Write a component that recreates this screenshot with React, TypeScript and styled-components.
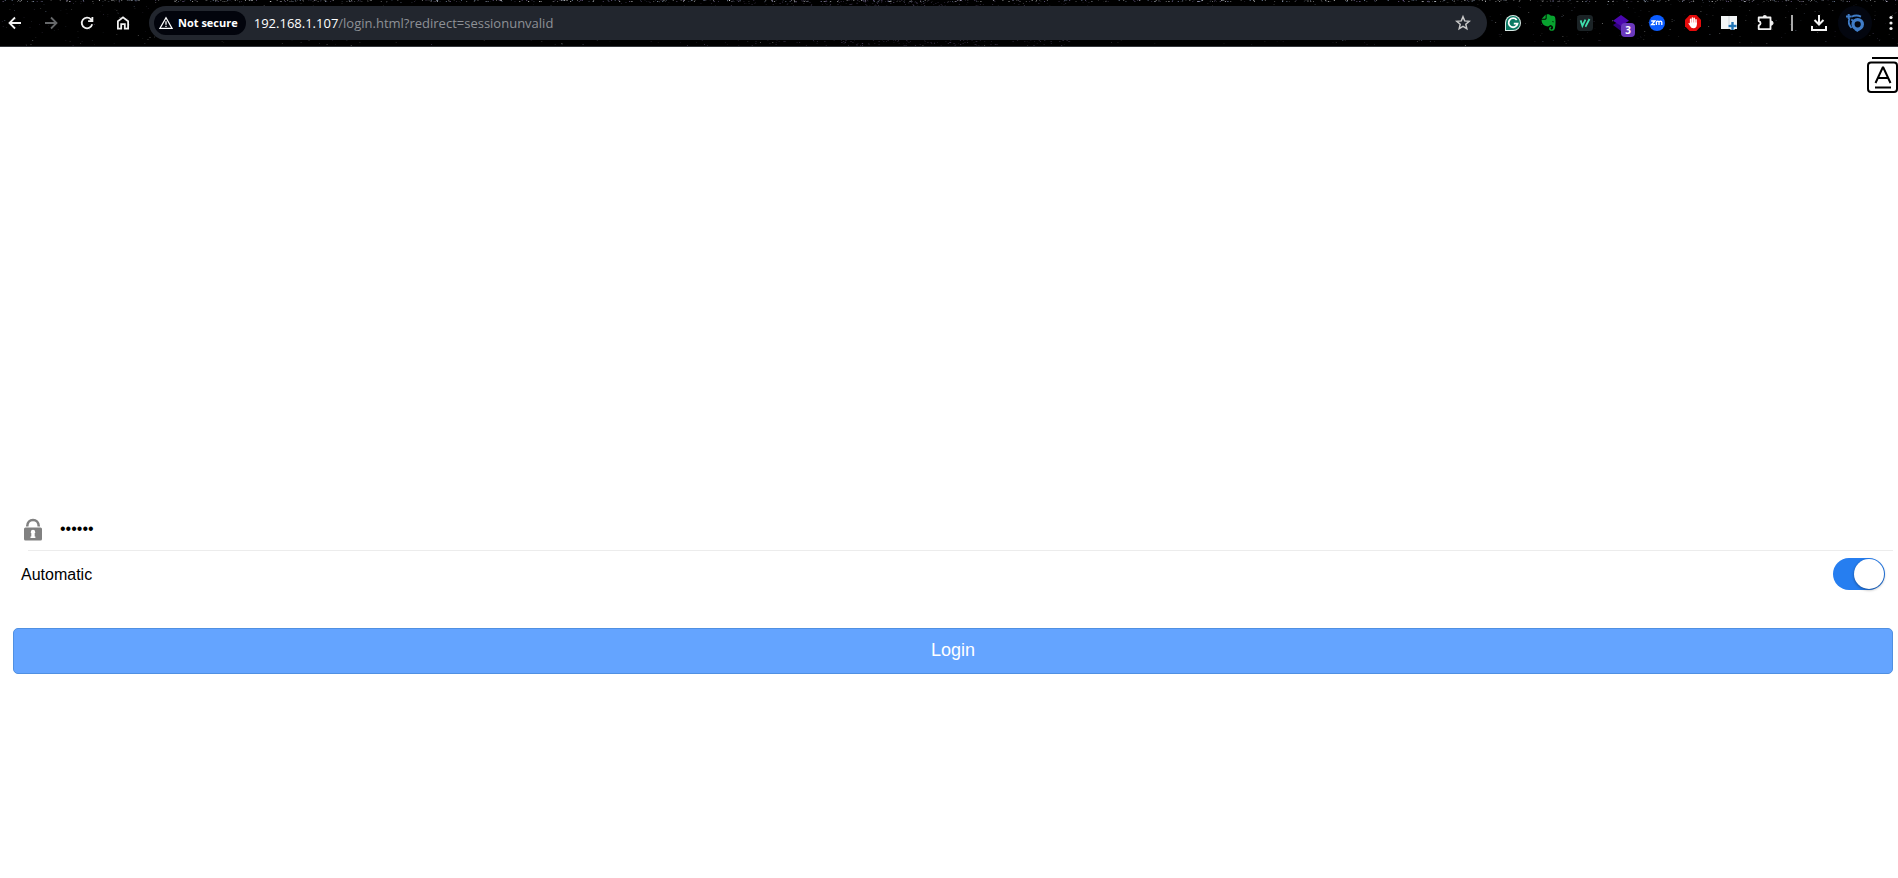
import React, { useState } from "react";
import styled, { createGlobalStyle } from "styled-components";

const GlobalStyle = createGlobalStyle`
  *, *::before, *::after { box-sizing: border-box; }
  html, body { margin: 0; background: #fff; }
  body { font-family: "Liberation Sans", Arial, sans-serif; color: #000; overflow-x: hidden; }
  button, input { font: inherit; }
`;

const Page = styled.div`
  display: flex;
  flex-direction: column;
  min-height: 100vh;
`;

const Toolbar = styled.header`
  position: relative;
  display: flex;
  align-items: center;
  height: 47px;
  background: #000;
  border-bottom: 1px solid #34373c;
  font-family: "Open Sans", "Noto Sans", sans-serif;
`;

const Sky = styled.svg`
  position: absolute;
  inset: 0;
  width: 100%;
  height: 100%;
`;

const ToolGroup = styled.div<{ $end?: boolean }>`
  position: relative;
  display: flex;
  align-items: center;
  flex: none;
  ${(p) => (p.$end ? "margin-left: 8px; margin-right: -11px;" : "margin-left: -3px; margin-right: 8px;")}
`;

const ToolButton = styled.button<{ $dim?: boolean }>`
  position: relative;
  display: flex;
  align-items: center;
  justify-content: center;
  width: 36px;
  height: 36px;
  padding: 0;
  border: 0;
  background: none;
  color: ${(p) => (p.$dim ? "#66686a" : "#f2f2f2")};
`;

const Divider = styled.span`
  width: 2px;
  height: 16px;
  margin: 0 8px;
  background: #a8a8a8;
`;

const AvatarButton = styled(ToolButton)`
  &::before {
    content: "";
    position: absolute;
    inset: 1px;
    border-radius: 50%;
    background: #03060f;
  }
  svg { position: relative; }
`;

const Badge = styled.span`
  position: absolute;
  left: 18px;
  top: 18px;
  width: 14px;
  height: 14px;
  border-radius: 4px;
  background: #6b39bd;
  color: #fff;
  font-size: 10px;
  font-weight: 700;
  line-height: 14px;
  text-align: center;
`;

const AddressBar = styled.div`
  position: relative;
  display: flex;
  align-items: center;
  flex: 1;
  min-width: 0;
  height: 34px;
  padding: 0 6px 0 5px;
  border-radius: 17px;
  background: #22262e;
`;

const SecurityChip = styled.button`
  display: flex;
  align-items: center;
  gap: 5px;
  height: 24px;
  padding: 0 8px 0 5px;
  border: 0;
  border-radius: 12px;
  background: #02040c;
  color: #fff;
  font-size: 11px;
  font-weight: 700;
  line-height: 24px;
  white-space: nowrap;
`;

const Url = styled.span`
  flex: 1;
  margin-left: 8px;
  color: #8e9196;
  font-size: 13px;
  line-height: 20px;
  white-space: nowrap;
`;

const Host = styled.span`
  color: #fff;
`;

const Main = styled.main`
  display: flex;
  flex-direction: column;
  flex: 1;
`;

const LanguageRow = styled.div`
  display: flex;
  justify-content: flex-end;
  height: 56px;
  padding-top: 10px;
`;

const LanguageButton = styled.button`
  width: 32px;
  height: 36px;
  padding: 0;
  border: 0;
  background: none;
  color: #000;
`;

const LoginForm = styled.form`
  display: flex;
  flex-direction: column;
  margin: 405px 5px 0 13px;
`;

const PasswordRow = styled.label`
  display: flex;
  align-items: center;
  height: 42px;
  margin-left: 11px;
`;

const PasswordInput = styled.input`
  flex: 1;
  height: 30px;
  margin-left: 18px;
  padding: 0;
  border: 0;
  outline: 0;
  background: none;
  color: #000;
  font-size: 16px;
`;

const Rule = styled.hr`
  width: calc(100% - 15px);
  height: 1px;
  margin: 0 0 0 15px;
  border: 0;
  background: #ececec;
`;

const SwitchRow = styled.label`
  display: flex;
  align-items: center;
  justify-content: space-between;
  height: 46px;
  padding: 0 8px;
  font-size: 16px;
`;

const SwitchText = styled.span`
  padding-top: 2px;
  line-height: 24px;
`;

const Switch = styled.input`
  position: relative;
  appearance: none;
  width: 52px;
  height: 32px;
  margin: 0;
  border-radius: 16px;
  background: #dfdfdf;
  &:checked { background: #267ef0; }
  &::after {
    content: "";
    position: absolute;
    top: 1px;
    left: 1px;
    width: 30px;
    height: 30px;
    border-radius: 50%;
    background: #fff;
    box-shadow: 0 1px 3px rgba(0, 0, 0, 0.4);
  }
  &:checked::after { left: 21px; }
`;

const LoginButton = styled.button`
  height: 46px;
  margin-top: 31px;
  padding: 0 0 1px;
  border: 1px solid #5090e2;
  border-radius: 5px;
  background: #64a4ff;
  color: #fff;
  font-size: 18px;
`;

type Star = { x: number; y: number; o: number; c: string };

function makeStars(): Star[] {
  let seed = 4711;
  const rnd = () => {
    seed = (seed * 16807) % 2147483647;
    return seed / 2147483647;
  };
  const tints = ["#ffffff", "#9fb4d8", "#8d79b0", "#b8b8b8"];
  const stars: Star[] = [];
  for (let i = 0; i < 650; i++) {
    stars.push({ x: rnd() * 100, y: Math.floor(rnd() * 2), o: 0.15 + rnd() * 0.55, c: tints[Math.floor(rnd() * 4)] });
  }
  for (let i = 0; i < 900; i++) {
    stars.push({ x: rnd() * 100, y: Math.floor(rnd() * 46), o: 0.08 + rnd() * rnd() * 0.4, c: tints[Math.floor(rnd() * 4)] });
  }
  for (let i = 0; i < 1100; i++) {
    stars.push({ x: 47 + (rnd() + rnd() + rnd() - 1.5) * 9, y: Math.floor(rnd() * 46), o: 0.1 + rnd() * 0.3, c: "#8d79b0" });
  }
  return stars;
}

const STARS = makeStars();

const line = { fill: "none", stroke: "currentColor", strokeWidth: 1.8 } as const;

const BackIcon = () => (
  <svg width="20" height="20" viewBox="0 0 20 20" {...line}><path d="M16 10H5M10 4.5 4.5 10l5.500 5.500" /></svg>
);
const ForwardIcon = () => (
  <svg width="20" height="20" viewBox="0 0 20 20" {...line}><path d="M4 10h11M10 4.500 15.500 10 10 15.500" /></svg>
);
const ReloadIcon = () => (
  <svg width="20" height="20" viewBox="0 0 20 20" {...line}><path d="M15.200 11.300A5.300 5.300 0 1 1 14 6.400l1.200 1.400M15.400 4v4.200h-4.300" /></svg>
);
const HomeIcon = () => (
  <svg width="20" height="20" viewBox="0 0 20 20" {...line}><path d="M4.900 15.700V8.300L10 4.300l5.100 4v7.400h-3.300v-4.500H8.200v4.500z" /></svg>
);
const WarningIcon = () => (
  <svg width="14" height="14" viewBox="0 0 14 14" fill="none" stroke="#fff" strokeWidth="1.300">
    <path d="M7 1.700 13 12.300H1z" /><path d="M7 5.200v3.600M7 9.700v1.300" />
  </svg>
);
const StarIcon = () => (
  <svg width="20" height="20" viewBox="0 0 20 20" fill="none" stroke="#c8c8c8" strokeWidth="1.500">
    <path d="m10 3.800 1.700 4.100 4.500.4-3.400 3 1 4.400-3.800-2.300-3.800 2.300 1-4.400-3.400-3 4.500-.4z" />
  </svg>
);
const GrammarIcon = () => (
  <svg width="16" height="16" viewBox="0 0 16 16">
    <path d="M8 0a8 8 0 1 1 0 16H0V8a8 8 0 0 1 8-8z" fill="#d6e8e3" />
    <path d="M8 1a7 7 0 1 1 0 14H1V8a7 7 0 0 1 7-7z" fill="#0b7963" />
    <path d="M11.700 5A4.500 4.500 0 1 0 12.500 8.700H8.800" fill="none" stroke="#fff" strokeWidth="1.800" />
  </svg>
);
const ElephantIcon = () => (
  <svg width="16" height="18" viewBox="0 0 16 18">
    <path d="M4.700.6v3.200c0 .6-.3.900-.9.900H.7L4.700.6zM5.600.5c2-.6 3.400.2 3.900 1 1.600.2 3.400.3 4.100 1 .9 1 1 4 .9 6.500-.1 3.200-.4 6.800-2 7.500-1.300.6-4 .5-4.300-1.300-.3-1.600.6-2.700 2.100-2.700v1.300c-.9 0-1.100 1.300-.2 1.600 1.600.4 2-1 1.800-2.500-.2-1.400-1.900-1.200-2.900-1.800-.5 1.100-1.700 1.500-3.300 1.200C2.500 11.700.6 9.200.5 5.700h3.800c.9 0 1.300-.6 1.300-1.400z" fill="#08a22f" />
    <path d="M11 8.100c.1-1 1.800-1.200 2 .2z" fill="#001505" />
  </svg>
);
const StrokesIcon = () => (
  <svg width="16" height="16" viewBox="0 0 16 16">
    <rect width="16" height="16" rx="3.500" fill="#1b2326" />
    <path d="m3.600 5.400 1.800 5.400 3-6.200M8.200 10.700 8.800 11 12.500 4" fill="none" stroke="#3fe0ae" strokeWidth="1.800" />
  </svg>
);
const LayersIcon = () => (
  <svg width="18" height="18" viewBox="0 0 18 18">
    <path d="m9 6 8 5-8 6-8-6z" fill="#32007f" /><path d="m9 1 8 5.700L9 12 1 6.700z" fill="#4a06ae" />
  </svg>
);
const MeetingIcon = () => (
  <svg width="16" height="16" viewBox="0 0 16 16">
    <circle cx="8" cy="8" r="8" fill="#0b5cff" />
    <path d="M2.200 6h3.600L2.500 9.700H6M7.400 10V7.200c0-1.500 2.600-1.500 2.600 0V10m0-2.800c0-1.500 2.800-1.500 2.800 0V10" fill="none" stroke="#fff" strokeWidth="1.300" />
  </svg>
);
const StopHandIcon = () => (
  <svg width="16" height="16" viewBox="0 0 16 16">
    <path d="M4.700 0h6.600L16 4.700v6.600L11.300 16H4.700L0 11.300V4.700z" fill="#e50b0b" />
    <path d="M5.600 9V4.300M7.400 8V3.100M9.200 8V3.300M11 9V4.700" stroke="#fff" strokeWidth="1.500" strokeLinecap="round" />
    <path d="M4.900 7.500h6.900v2.200c0 2-1.200 3.500-3.200 3.500-1.800 0-2.800-1-3.500-2.300L3.300 8.500c.3-.8 1.100-.7 1.600 0z" fill="#fff" />
  </svg>
);
const PanelIcon = () => (
  <svg width="18" height="16" viewBox="0 0 18 16">
    <path d="M1 1h16v13H1z" fill="#f3f5f6" /><path d="M9 1v13" stroke="#cfd5da" />
    <path d="M12.500 7v8M8.500 11h8" stroke="#fff" strokeWidth="4" />
    <path d="M12.500 7v8M8.500 11h8" stroke="#2275b5" strokeWidth="2.400" />
  </svg>
);
const PuzzleIcon = () => (
  <svg width="20" height="20" viewBox="0 0 20 20" {...line}>
    <path d="M3.700 4.500H15.500v11.600H3.700v-3.600c2.500-.4 2.500-3.900 0-4.300z" strokeLinejoin="round" />
    <path d="M7.700 4.200a2.100 2.100 0 0 1 4.200 0z" fill="currentColor" stroke="none" />
    <path d="M16 8a2.100 2.100 0 0 1 0 4.200z" fill="currentColor" stroke="currentColor" strokeWidth="1" />
  </svg>
);
const DownloadIcon = () => (
  <svg width="20" height="20" viewBox="0 0 20 20" {...line} strokeWidth="2">
    <path d="M10 2v9M5.500 7 10 11.500 14.500 7M3 13v4h14v-4" />
  </svg>
);
const ProfileIcon = () => (
  <svg width="20" height="20" viewBox="0 0 20 20" fill="none" stroke="#3f7cc7">
    <circle cx="12.700" cy="11.300" r="4.700" strokeWidth="3.200" />
    <path d="M1 3.600h5.500M3.700 1v5" strokeWidth="2" />
    <path d="M4.500 5.500C3 9 4.200 12.500 6.500 15M6.500 3.800c3-1.600 6.500-1.600 9.500-.2M6.300 6.500l2 1.500" strokeWidth="1.800" />
    <path d="M9.500 17h5.500l-2.700 2z" fill="#3f7cc7" stroke="none" />
  </svg>
);
const MenuIcon = () => (
  <svg width="20" height="20" viewBox="0 0 20 20" fill="currentColor">
    <circle cx="10" cy="4.500" r="1.600" /><circle cx="10" cy="10" r="1.600" /><circle cx="10" cy="15.500" r="1.600" />
  </svg>
);
const LanguageIcon = () => (
  <svg width="32" height="36" viewBox="0 0 32 36" fill="none" stroke="currentColor" strokeWidth="2">
    <path d="M6 1h26" />
    <rect x="2" y="5.500" width="29" height="29.500" rx="3" />
    <path d="M9.500 26 16.700 10.500h.6L24.500 26M12 21h10M9 30.500h16" />
  </svg>
);
const LockIcon = () => (
  <svg width="18" height="24" viewBox="0 0 18 24">
    <path d="M3.200 9.500C3.200 5.300 6 3 9 3s5.800 2.300 5.800 6.500" fill="none" stroke="#818181" strokeWidth="2.600" />
    <rect y="10.500" width="18" height="13" rx="1.500" fill="#818181" />
    <path d="M6.800 15a2.200 2.200 0 0 1 4.400 0v1h-.5v3.500h.7V21H6.500v-1.500h.8V16h-.5z" fill="#fff" />
  </svg>
);

export default function App() {
  const [password, setPassword] = useState("admin1");
  const [automatic, setAutomatic] = useState(true);

  return (
    <Page>
      <GlobalStyle />
      <Toolbar>
        <Sky aria-hidden="true">
          {STARS.map((s, i) => (
            <rect key={i} x={`${s.x}%`} y={s.y} width="1" height="1" fill={s.c} opacity={s.o} />
          ))}
        </Sky>
        <ToolGroup>
          <ToolButton aria-label="Back"><BackIcon /></ToolButton>
          <ToolButton aria-label="Forward" $dim><ForwardIcon /></ToolButton>
          <ToolButton aria-label="Reload"><ReloadIcon /></ToolButton>
          <ToolButton aria-label="Home"><HomeIcon /></ToolButton>
        </ToolGroup>
        <AddressBar>
          <SecurityChip><WarningIcon />Not secure</SecurityChip>
          <Url><Host>192.168.1.107</Host>/login.html?redirect=sessionunvalid</Url>
          <ToolButton aria-label="Bookmark"><StarIcon /></ToolButton>
        </AddressBar>
        <ToolGroup $end>
          <ToolButton aria-label="Writing assistant"><GrammarIcon /></ToolButton>
          <ToolButton aria-label="Notes"><ElephantIcon /></ToolButton>
          <ToolButton aria-label="Strokes"><StrokesIcon /></ToolButton>
          <ToolButton aria-label="Layers"><LayersIcon /><Badge>3</Badge></ToolButton>
          <ToolButton aria-label="Meetings"><MeetingIcon /></ToolButton>
          <ToolButton aria-label="Blocker"><StopHandIcon /></ToolButton>
          <ToolButton aria-label="Panels"><PanelIcon /></ToolButton>
          <ToolButton aria-label="Extensions"><PuzzleIcon /></ToolButton>
          <Divider />
          <ToolButton aria-label="Downloads"><DownloadIcon /></ToolButton>
          <AvatarButton aria-label="Profile"><ProfileIcon /></AvatarButton>
          <ToolButton aria-label="Menu"><MenuIcon /></ToolButton>
        </ToolGroup>
      </Toolbar>
      <Main>
        <LanguageRow>
          <LanguageButton aria-label="Language"><LanguageIcon /></LanguageButton>
        </LanguageRow>
        <LoginForm onSubmit={(e) => e.preventDefault()}>
          <PasswordRow>
            <LockIcon />
            <PasswordInput
              type="password"
              aria-label="Password"
              value={password}
              onChange={(e) => setPassword(e.target.value)}
            />
          </PasswordRow>
          <Rule />
          <SwitchRow>
            <SwitchText>Automatic</SwitchText>
            <Switch type="checkbox" role="switch" checked={automatic} onChange={(e) => setAutomatic(e.target.checked)} />
          </SwitchRow>
          <LoginButton type="submit">Login</LoginButton>
        </LoginForm>
      </Main>
    </Page>
  );
}
